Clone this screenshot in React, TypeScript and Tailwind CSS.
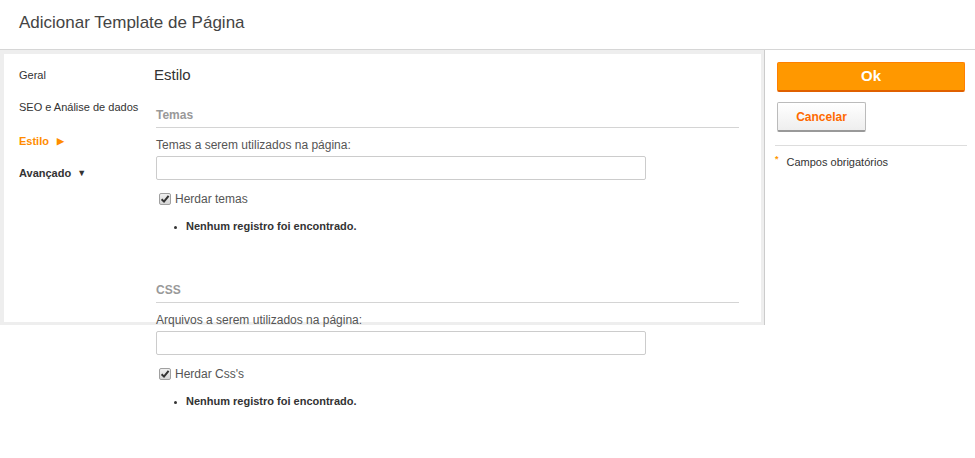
import React from "react";

function Check() {
  return (
    <span className="inline-flex h-[12px] w-[12px] items-center justify-center rounded-[2px] border border-[#a0a0a0] bg-gradient-to-b from-[#f0f0f0] to-[#d6d6d6]">
      <svg width="10" height="10" viewBox="0 0 10 10">
        <path d="M1.6 5.2 L4 7.6 L8.6 1.8" fill="none" stroke="#333" strokeWidth="2" />
      </svg>
    </span>
  );
}

function Section({ title, label, check }: { title: string; label: string; check: string }) {
  return (
    <div>
      <div className="border-b border-[#d4d4d4] pb-[5px] text-[12px] leading-[14px] font-bold text-[#999]">{title}</div>
      <div className="mt-[10px] text-[12px] leading-[14px] text-[#555]">{label}</div>
      <input className="mt-[4px] block h-[24px] w-[490px] rounded-[2px] border border-[#ccc] bg-white" />
      <label className="mt-[12px] flex items-center gap-[4px] pl-[3px] text-[12px] leading-[14px] text-[#555]">
        <Check />
        {check}
      </label>
      <ul className="mt-[13px] list-disc pl-[30px] text-[11px] leading-[14px] font-bold text-[#333] marker:text-[9px]">
        <li>Nenhum registro foi encontrado.</li>
      </ul>
    </div>
  );
}

export default function App() {
  return (
    <div className="min-h-[458px] bg-white text-[#333]" style={{ fontFamily: '"Liberation Sans", Arial, sans-serif' }}>
      <div className="h-[50px] border-b border-[#d6d6d6] pl-[19px] pt-[13px]">
        <h1 className="text-[17px] leading-[20px] text-[#444]">Adicionar Template de Página</h1>
      </div>

      <div className="flex">
        <div className="h-[275px] w-[764px] shrink-0 bg-[#eee] pt-[4px] pr-[3px] pb-[3px] pl-[4px]">
          <div className="flex h-full bg-white">
            <nav className="w-[150px] shrink-0 pl-[15px] pt-[14px] text-[11px] leading-[14px]">
              <div className="h-[32px] text-[#333]">Geral</div>
              <div className="h-[34px] text-[#333]">SEO e Análise de dados</div>
              <div className="flex h-[32px] gap-[8px] font-bold text-[#ff8c00]">
                Estilo <span className="text-[9px]">▶</span>
              </div>
              <div className="flex gap-[6px] font-bold text-[#333]">
                Avançado <span className="text-[9px]">▼</span>
              </div>
            </nav>
            <div className="w-[585px] pt-[12px]">
              <h2 className="text-[15px] leading-[18px] text-[#333]">Estilo</h2>
              <div className="mt-[24px] pl-[2px]">
                <Section title="Temas" label="Temas a serem utilizados na página:" check="Herdar temas" />
                <div className="mt-[50px]">
                  <Section title="CSS" label="Arquivos a serem utilizados na página:" check="Herdar Css's" />
                </div>
              </div>
            </div>
          </div>
        </div>

        <aside className="h-[275px] flex-1 border-l border-[#ccc] px-[10px] pt-[12px]">
          <button className="mx-[2px] block h-[30px] w-[188px] rounded-[2px] border border-[#ff8000] border-b-[2px] border-b-[#e06000] bg-[#ff9800] text-[15px] font-bold text-white">
            Ok
          </button>
          <button className="mx-[2px] mt-[10px] block h-[30px] w-[89px] rounded-[2px] border border-[#bbb] border-b-[2px] border-b-[#999] bg-gradient-to-b from-white to-[#eee] text-[12px] font-bold text-[#ff6a00]">
            Cancelar
          </button>
          <div className="mt-[13px] border-t border-[#ddd]" />
          <div className="mt-[9px] flex items-start text-[11px] leading-[14px] text-[#333]">
            <span className="mr-[8px] text-[9px] leading-[9px] font-bold text-[#f90]">*</span>
            Campos obrigatórios
          </div>
        </aside>
      </div>
    </div>
  );
}
